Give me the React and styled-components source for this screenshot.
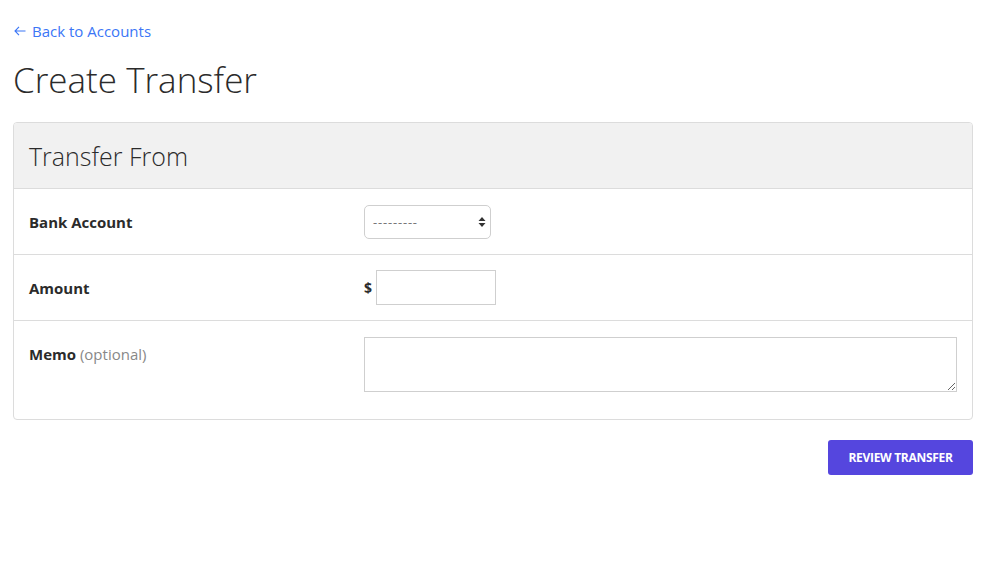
import React from 'react';
import styled, { createGlobalStyle } from 'styled-components';

const GlobalStyle = createGlobalStyle`
  body {
    margin: 0;
    background: #fff;
    font-family: "Open Sans", "Liberation Sans", sans-serif;
    color: #333;
  }
`;

const Page = styled.div`
  padding: 20px 24px 0 13px;
`;

const BackLink = styled.a`
  display: inline-flex;
  align-items: center;
  gap: 6px;
  color: #3b76f6;
  font-size: 15px;
  text-decoration: none;
  cursor: pointer;
  margin-left: 1px;
`;

const Title = styled.h1`
  margin: 15px 0 19px;
  font-size: 35px;
  font-weight: 300;
  line-height: 46px;
  color: #2b2b2b;
`;

const Card = styled.section`
  border: 1px solid #dcdcdc;
  border-radius: 4px;
  overflow: hidden;
`;

const CardHeader = styled.header`
  background: #f1f1f1;
  height: 65px;
  display: flex;
  align-items: center;
  padding: 0 15px;
  border-bottom: 1px solid #dcdcdc;
`;

const CardTitle = styled.h2`
  margin: 0;
  font-size: 25px;
  font-weight: 300;
  color: #2b2b2b;
`;

const Row = styled.div`
  display: grid;
  grid-template-columns: 335px 1fr;
  align-items: ${p => (p.top ? 'start' : 'center')};
  padding: ${p => (p.top ? '16px 15px 27px' : '15px')};
  min-height: ${p => (p.top ? 'auto' : '35px')};
  & + & {
    border-top: 1px solid #dcdcdc;
  }
`;

const Label = styled.label`
  font-size: 15px;
  font-weight: 700;
  color: #2b2b2b;
  padding-top: ${p => (p.top ? '7px' : '0')};
`;

const Hint = styled.span`
  font-weight: 400;
  color: #888;
`;

const Select = styled.select`
  width: 127px;
  height: 34px;
  border: 1px solid #cfcfcf;
  border-radius: 5px;
  background: #fff;
  color: #777;
  font-family: "Open Sans", "Liberation Sans", sans-serif;
  font-size: 13px;
  letter-spacing: 0.8px;
  padding: 0 8px;
  appearance: none;
  background-image: url("data:image/svg+xml;utf8,<svg xmlns='http://www.w3.org/2000/svg' width='8' height='12'><path d='M4 1 L7.5 5 H0.5Z M4 11 L7.5 7 H0.5Z' fill='%23333'/></svg>");
  background-repeat: no-repeat;
  background-position: right 4px center;
`;

const MoneyField = styled.div`
  display: flex;
  align-items: center;
  gap: 4px;
`;

const Currency = styled.span`
  font-size: 14px;
  font-weight: 700;
  color: #2b2b2b;
`;

const TextInput = styled.input`
  width: 120px;
  height: 35px;
  box-sizing: border-box;
  border: 1px solid #cfcfcf;
  border-radius: 0;
  padding: 0 6px;
  font-family: inherit;
  font-size: 14px;
`;

const TextArea = styled.textarea`
  width: 593px;
  height: 55px;
  box-sizing: border-box;
  border: 1px solid #cfcfcf;
  border-radius: 0;
  font-family: inherit;
  font-size: 14px;
  padding: 6px;
  display: block;
`;

const Actions = styled.div`
  display: flex;
  justify-content: flex-end;
  margin-top: 20px;
`;

const Button = styled.button`
  width: 145px;
  height: 35px;
  background: #5546de;
  color: #fff;
  border: none;
  border-radius: 3px;
  font-family: "Open Sans", "Liberation Sans", sans-serif;
  font-size: 12px;
  font-weight: 700;
  text-transform: uppercase;
  letter-spacing: -0.3px;
  cursor: pointer;
`;

const ArrowLeft = () => (
  <svg width="12" height="12" viewBox="0 0 12 12" fill="none" stroke="currentColor" strokeWidth="1.1">
    <path d="M11.5 6H1M5 1.8L1 6l4 4.2" />
  </svg>
);

export default function App() {
  return (
    <>
      <GlobalStyle />
      <Page>
        <BackLink>
          <ArrowLeft />
          Back to Accounts
        </BackLink>
        <Title>Create Transfer</Title>
        <Card>
          <CardHeader>
            <CardTitle>Transfer From</CardTitle>
          </CardHeader>
          <Row>
            <Label>Bank Account</Label>
            <div>
              <Select defaultValue="">
                <option value="">---------</option>
              </Select>
            </div>
          </Row>
          <Row>
            <Label>Amount</Label>
            <MoneyField>
              <Currency>$</Currency>
              <TextInput type="text" />
            </MoneyField>
          </Row>
          <Row top>
            <Label top>
              Memo <Hint>(optional)</Hint>
            </Label>
            <TextArea />
          </Row>
        </Card>
        <Actions>
          <Button>Review Transfer</Button>
        </Actions>
      </Page>
    </>
  );
}
